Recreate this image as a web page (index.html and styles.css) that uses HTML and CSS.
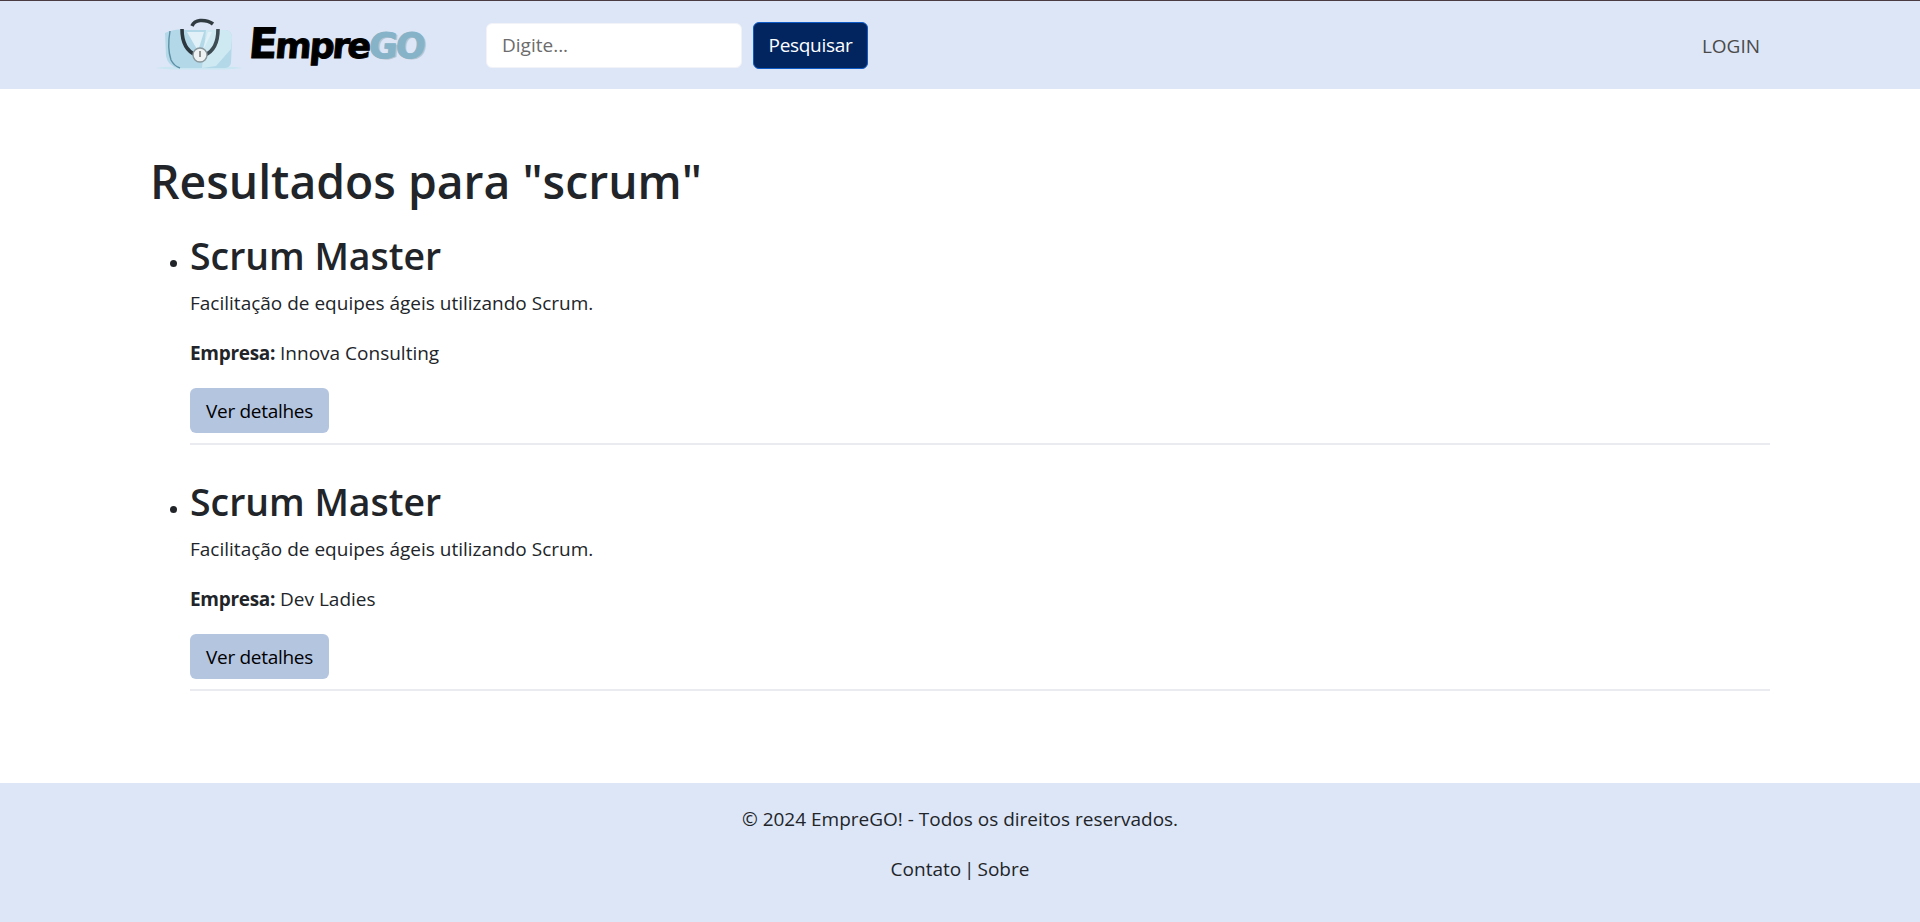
FILE: index.html
```html
<!DOCTYPE html>
<html lang="pt-BR">

<head>
  <title>EmpreGO</title>
  <meta charset="utf-8">
  <link rel="stylesheet" href="styles.css">
</head>

<body>
  <header class="topbar">
    <a class="logo" href="#">
      <svg class="logo__icon" viewBox="0 0 87 54" width="87" height="54">
        <ellipse cx="43" cy="50" rx="43" ry="1.6" fill="#c9e6f2" />
        <path d="M9 15Q19 10 30 12L70 12Q76 13 76 20L75 45Q74 50 68 50L22 50Q12 48 10 38Z" fill="#b3d8e8" />
        <path d="M50 12L70 12Q76 13 76 20L75 31 60 48 46 50Z" fill="#cfe9f3" />
        <path d="M31 14L42 33 48 14 52 14 46 34 56 14Z" fill="#e2f1f7" />
        <path d="M14 13Q11 30 15 42 18 48 24 50" stroke="#5c8ea5" stroke-width="1.4" fill="none" />
        <path d="M26 11C26 24 30 33 40 37" stroke="#2b363d" stroke-width="3.6" fill="none" />
        <path d="M62 11C62 24 58 33 49 37" stroke="#3d4b53" stroke-width="3.6" fill="none" />
        <path d="M36 8Q38 3 44 2.5 52 2 57 6" stroke="#2f3a41" stroke-width="3.6" fill="none" />
        <circle cx="44" cy="37" r="7" fill="#eef2f2" stroke="#8a979c" stroke-width="1.4" />
        <path d="M44 33v6" stroke="#555" stroke-width="1.2" />
      </svg>
      <span class="logo__text"><span class="logo__cap">E</span>mpre<span class="logo__go">GO</span></span>
    </a>
    <form class="search">
      <input class="search__input" type="text" placeholder="Digite...">
      <button class="search__button" type="button">Pesquisar</button>
    </form>
    <a class="login" href="#">LOGIN</a>
  </header>

  <main class="content">
    <h1>Resultados para "scrum"</h1>
    <ul class="results">
      <li class="results__item">
        <h2>Scrum Master</h2>
        <p>Facilitação de equipes ágeis utilizando Scrum.</p>
        <p><strong>Empresa:</strong> Innova Consulting</p>
        <a class="details" href="#">Ver detalhes</a>
      </li>
      <li class="results__item">
        <h2>Scrum Master</h2>
        <p>Facilitação de equipes ágeis utilizando Scrum.</p>
        <p><strong>Empresa:</strong> Dev Ladies</p>
        <a class="details" href="#">Ver detalhes</a>
      </li>
    </ul>
  </main>

  <footer class="bottom">
    <p>© 2024 EmpreGO! - Todos os direitos reservados.</p>
    <p class="bottom__links"><a href="#">Contato</a> | <a href="#">Sobre</a></p>
  </footer>
</body>

</html>
```

FILE: styles.css
```css
* {
  box-sizing: border-box;
}

body {
  margin: 0px;
  padding: 0px;
  font-family: "Open Sans", "Noto Sans", sans-serif;
  font-size: 19px;
  line-height: 34px;
  color: #212529;
  background-color: #fff;
}

a {
  color: inherit;
  text-decoration: none;
}

.topbar {
  display: flex;
  align-items: center;
  height: 89px;
  padding: 0px 160px 0px 156px;
  background-color: #dde6f7;
  border-top: 1px solid #4a3a42;
}

.logo {
  display: flex;
  align-items: center;
  gap: 6px;
  width: 330px;
}

.logo__icon {
  flex: none;
}

.logo__text {
  font-family: "DejaVu Sans", sans-serif;
  font-size: 35px;
  font-weight: 700;
  letter-spacing: -2.2px;
  color: #000;
  -webkit-text-stroke: 1px #000;
  transform: skewX(-5deg);
}

.logo__cap {
  font-size: 42px;
}

.logo__go {
  color: #86b3c8;
  -webkit-text-stroke: 1px #86b3c8;
  text-shadow: 2px 1px 0px #b9c4cc;
}

.search {
  display: flex;
  align-items: center;
  gap: 11px;
}

.search__input {
  width: 256px;
  height: 45px;
  padding: 6px 15px;
  border: 1px solid #f1f3f8;
  border-radius: 6px;
  background-color: #fff;
  font: inherit;
}

.search__input::placeholder {
  color: #6c6c6c;
}

.search__button {
  width: 115px;
  height: 47px;
  padding: 0px;
  border: 1px solid #0d5bc6;
  border-radius: 6px;
  background-color: #02255f;
  color: #fff;
  font: inherit;
  letter-spacing: -0.3px;
}

.login {
  margin-left: auto;
  padding-top: 2px;
  color: #4a4a4a;
}

.content {
  padding: 68px 150px 0px 150px;
  height: 694px;
}

h1 {
  margin: 0px 0px 6px 0px;
  font-size: 46.3px;
  line-height: 50px;
  font-weight: 600;
}

h2 {
  margin: 0px 0px 9px 0px;
  font-size: 37.4px;
  line-height: 43px;
  font-weight: 600;
}

p {
  margin: 0px 0px 16px 0px;
}

strong {
  letter-spacing: -0.3px;
}

.results {
  margin: 0px;
  padding: 21px 0px 0px 40px;
}

.results__item {
  padding-bottom: 10px;
  margin-bottom: 35px;
  border-bottom: 2px solid #e9ebf0;
}

.details {
  display: block;
  width: 139px;
  height: 45px;
  margin-top: 18px;
  line-height: 46px;
  text-align: center;
  border-radius: 6px;
  background-color: #b4c5e0;
  color: #000;
  letter-spacing: -0.3px;
}

.bottom {
  height: 139px;
  padding-top: 19px;
  background-color: #dde6f7;
  text-align: center;
}

.bottom__links {
  word-spacing: -2px;
}
```
